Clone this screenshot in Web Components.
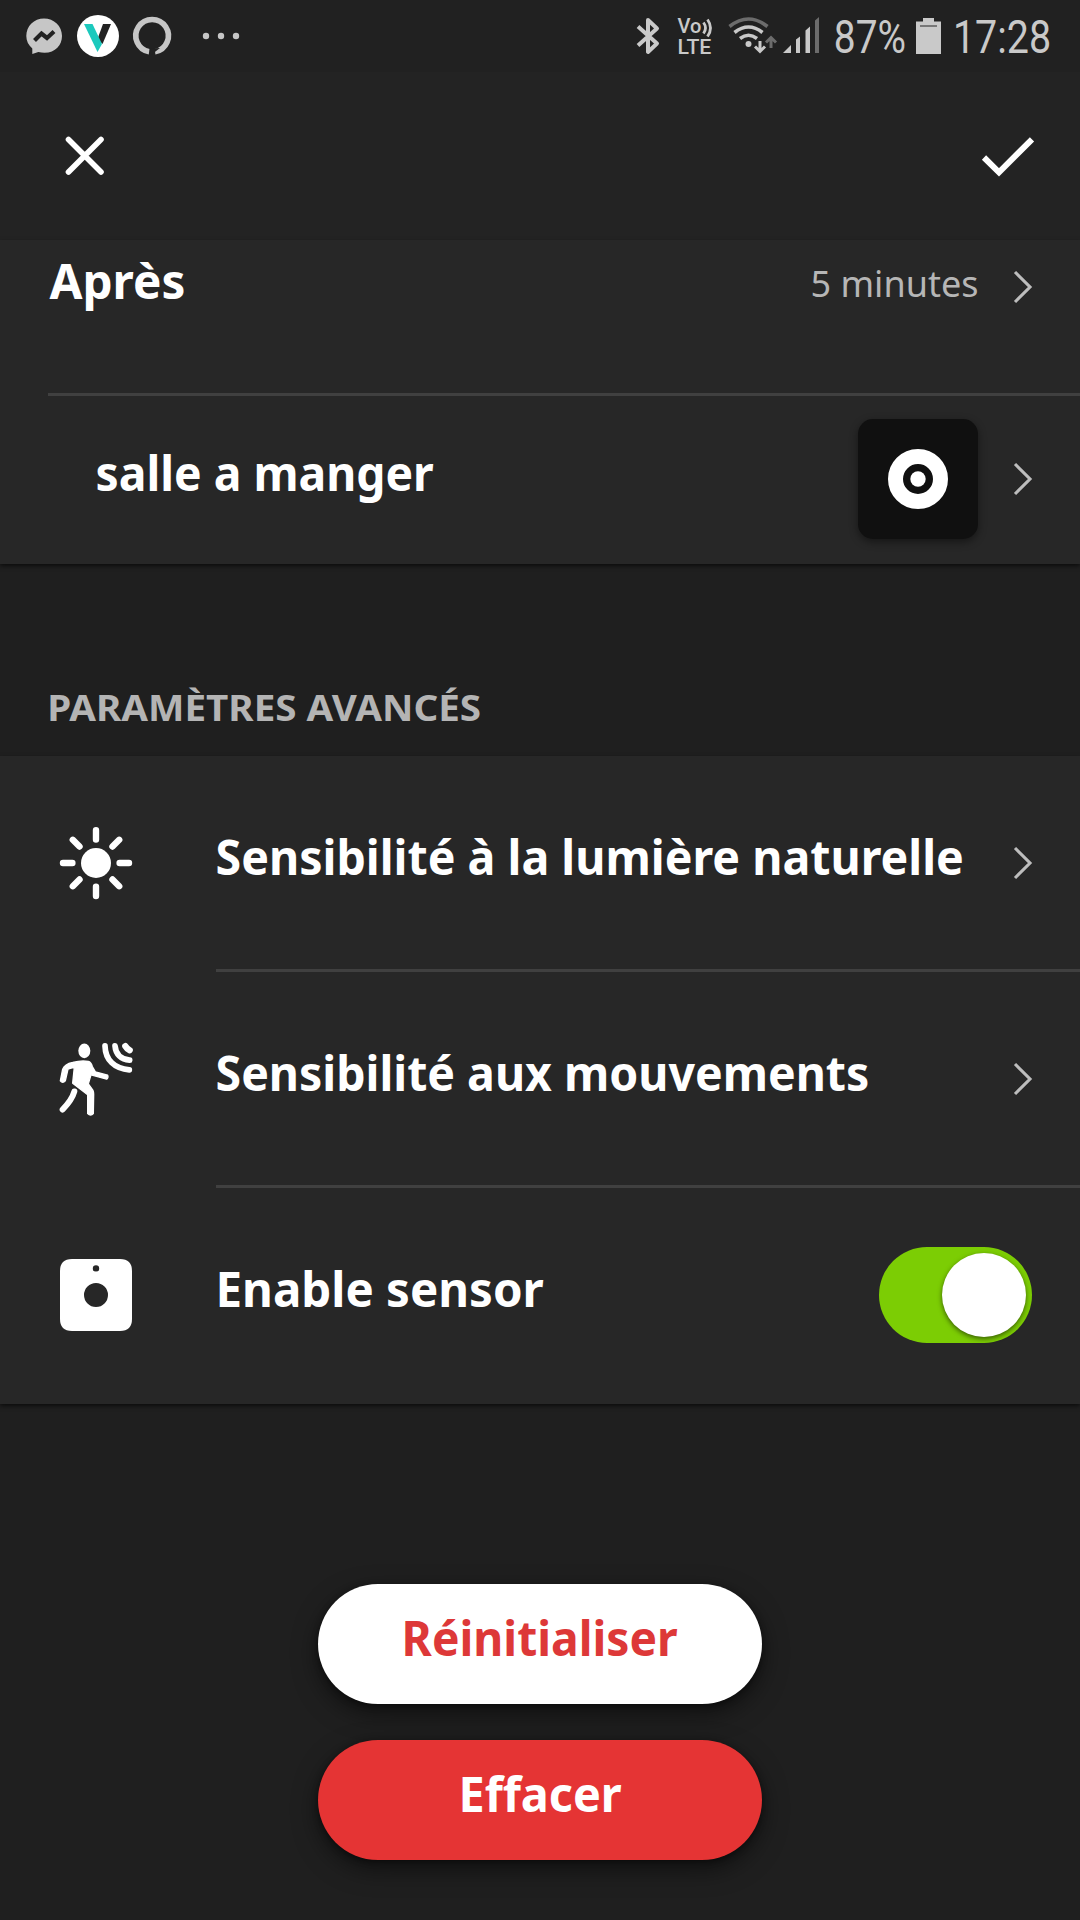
<!DOCTYPE html>
<html lang="fr">
<head>
<meta charset="utf-8">
<title>Paramètres du capteur</title>
<style>
	html, body {
		margin: 0;
		background: #1f1f1f;
	}
	body {
		width: 1080px;
		height: 1920px;
		overflow: hidden;
		font-family: "Noto Sans", "Open Sans", sans-serif;
		color: #fff;
	}
</style>
</head>
<body>
<sensor-page>
	<status-bar slot="status"></status-bar>
	<app-bar slot="bar"></app-bar>

	<settings-card>
		<settings-row class="cut" inset="48">
			<fit-text width="134">Après</fit-text>
			<fit-text slot="value" class="value" width="165">5 minutes</fit-text>
			<ui-icon slot="end" name="chevron"></ui-icon>
		</settings-row>
		<settings-row class="room" inset="96">
			<fit-text width="336">salle a manger</fit-text>
			<scene-tile slot="value"></scene-tile>
			<ui-icon slot="end" name="chevron"></ui-icon>
		</settings-row>
	</settings-card>

	<section-title><fit-text width="430">PARAMÈTRES AVANCÉS</fit-text></section-title>

	<settings-card>
		<settings-row inset="216">
			<ui-icon slot="icon" name="sun"></ui-icon>
			<fit-text width="745">Sensibilité à la lumière naturelle</fit-text>
			<ui-icon slot="end" name="chevron"></ui-icon>
		</settings-row>
		<settings-row inset="216">
			<ui-icon slot="icon" name="motion"></ui-icon>
			<fit-text width="650">Sensibilité aux mouvements</fit-text>
			<ui-icon slot="end" name="chevron"></ui-icon>
		</settings-row>
		<settings-row class="last" inset="218">
			<ui-icon slot="icon" name="sensor"></ui-icon>
			<fit-text width="324">Enable sensor</fit-text>
			<toggle-switch slot="end"></toggle-switch>
		</settings-row>
	</settings-card>

	<pill-button slot="actions"><fit-text width="272">Réinitialiser</fit-text></pill-button>
	<pill-button slot="actions" class="danger"><fit-text width="159">Effacer</fit-text></pill-button>
</sensor-page>

<script>
(function() {
	const ICONS = {
		close: [40, 40, `<path d="M3.5 3.5L36 36M36 3.5L3.5 36" fill="none" stroke="#fff" stroke-width="5.6" stroke-linecap="round"/>`],
		check: [54, 42, `<path d="M3 22.5L18 37.3L51 4.3" fill="none" stroke="#fff" stroke-width="6"/>`],
		chevron: [20, 34, `<path d="M3 2L18 17L3 32" fill="none" stroke="#bdbdbd" stroke-width="3.1"/>`],
		sun: [72, 72, `<circle cx="36" cy="36" r="15" fill="#fff"/>
			<path d="M36 3.2V12.6M36 59.6V69M3 36H12.4M59.6 36H69M12.8 12.8L19.5 19.5M59.2 12.8L52.5 19.5M12.8 59.2L19.5 52.5M59.2 59.2L52.5 52.5"
				fill="none" stroke="#fff" stroke-width="6.4" stroke-linecap="round"/>`],
		motion: [72, 72, `<g transform="scale(.33333) translate(-60 -67.5)" stroke-linecap="round" stroke-linejoin="round">
			<ellipse cx="133" cy="91" rx="18" ry="22" fill="#fff"/>
			<path d="M98 126Q125 119 145 123Q153 125 157 138L166 154L203 164Q206 171 200 176L153 163L145 190L159 210Q161 214 161 221L160 279Q152 288 143 279L143 223L98 188L103 140L84 146L76 181Q68 190 61 181L68 146Q74 131 98 126Z" fill="#fff" stroke="#fff" stroke-width="4"/>
			<path d="M103 213Q96 238 68 267" fill="none" stroke="#fff" stroke-width="18"/>
			<g fill="none" stroke="#fff" stroke-width="17">
				<path d="M195 76C196 119 224 145 268 148"/>
				<path d="M225 76C227 102 243 117 269 119"/>
			</g>
			<path d="M256 77Q260 84 269 89" fill="none" stroke="#fff" stroke-width="19"/>
		</g>`],
		sensor: [72, 72, `<path fill="#fff" fill-rule="evenodd" d="M12 0H60Q72 0 72 12V60Q72 72 60 72H12Q0 72 0 60V12Q0 0 12 0ZM36 24a12 12 0 1 0 0 24a12 12 0 1 0 0 -24ZM36 6.2a3.2 3.2 0 1 0 0 6.4a3.2 3.2 0 1 0 0 -6.4Z"/>`],
		messenger: [36, 37, `<path d="M18 .5C8 .5.3 8 .3 18c0 5 2.2 9.2 6 12.5V36l6-2C27 37.500 36 28.500 36 18C36 8 28 .5 18 .5Z" fill="#c6c6c6"/>
			<path d="M8.500 22.500L15.500 15.500L21 20L28 13.500" fill="none" stroke="#212121" stroke-width="4.200"/>`],
		vmark: [42, 42, `<circle cx="21" cy="21" r="21" fill="#fff"/>
			<path d="M26 9H34L25.500 29L20.500 24Z" fill="#222"/>
			<path d="M7 9H15.500L25 29L20.500 37Z" fill="#1cc9bd"/>`],
		ring: [38, 38, `<path d="M16.200 34.800A16.300 16.300 0 1 1 22 34.800" fill="none" stroke="#c6c6c6" stroke-width="5.600"/>
			<path d="M16.600 38V31.500L27 31L18 38Z" fill="#212121"/>`],
		dots: [38, 8, `<g fill="#c6c6c6"><circle cx="4" cy="4" r="3.200"/><circle cx="19" cy="4" r="3.200"/><circle cx="34" cy="4" r="3.200"/></g>`],
		bluetooth: [24, 38, `<path d="M2 9.500L21 26.500L12 35V3L21 11.500L2 28.500" fill="none" stroke="#c9c9c9" stroke-width="4" stroke-linejoin="round"/>`],
		waves: [10, 18, `<path d="M1.500 3.500Q5.500 9 1.500 14.500M5.500 .5Q11.500 9 5.500 17.500" fill="none" stroke="#c9c9c9" stroke-width="2.800"/>`],
		wifi: [48, 37, `<g fill="none" stroke="#c9c9c9" stroke-width="3.600">
				<path d="M1.500 9.500Q20.500 -5.500 39.500 9.500" stroke="#6c6c6c"/>
				<path d="M6.500 15.500Q20.500 4.500 34.500 15.500"/>
				<path d="M12 21.500Q20.500 15 29 21.500"/>
				<path d="M32 24V34M27 29.500L32 34.500L37 29.500" stroke-width="3"/>
				<path d="M43 31V21M38 25.500L43 20.500L48 25.500" stroke="#6c6c6c" stroke-width="3"/>
			</g><circle cx="20.500" cy="27" r="3" fill="#c9c9c9"/>`],
		signal: [36, 37, `<path d="M0 36L8 28V36ZM13 22.500L17 19.500V36H13ZM22.500 13.500L27 9.500V36H22.500Z" fill="#c9c9c9"/><path d="M32 3.500L36 0V36H32Z" fill="#6c6c6c"/>`],
		battery: [25, 36, `<path d="M7 0H18V3.500H25V36H0V3.500H7Z" fill="#c9c9c9"/><path d="M4 8H21" stroke="#777" stroke-width="2"/>`]
	};

	function define(name, html, setup) {
		const template = document.createElement("template");
		template.innerHTML = html;
		customElements.define(name, class extends HTMLElement {
			constructor() {
				super();
				this._shadowRoot = this.attachShadow({mode: "open"});
				this._shadowRoot.appendChild(template.content.cloneNode(true));
			}

			connectedCallback() {
				if (setup) {
					setup(this, this._shadowRoot);
				}
			}
		});
	}

	// icon by name, drawn at its own size
	define("ui-icon", `
		<style>
		:host { display: block; flex: none; }
		svg { display: block; overflow: visible; }
		</style>
		<div id="box"></div>
	`, (el, root) => {
		const [w, h, body] = ICONS[el.getAttribute("name")];
		root.getElementById("box").innerHTML = `<svg width="${w}" height="${h}" viewBox="0 0 ${w} ${h}">${body}</svg>`;
	});

	define("status-bar", `
		<style>
		:host {
			display: flex;
			align-items: flex-start;
			height: 72px;
			box-sizing: border-box;
			padding: 0 32px 0 26px;
			background: #212121;
			font-family: Roboto, sans-serif;
			color: #c9c9c9;
		}
		.gap { flex: 1; }
		.big { font-size: 46px; line-height: 46px; margin-top: 14px; }
		.volte { margin: 16px 0 0 16px; font-size: 21px; line-height: 21px; font-weight: 500; }
		.vo { display: flex; gap: 2px; height: 21px; }
		.vo ui-icon { margin-top: 3px; }
		.volte > fit-text { margin-left: 1px; }
		</style>
		<ui-icon name="messenger" style="margin-top:18px"></ui-icon>
		<ui-icon name="vmark" style="margin:15px 0 0 15px"></ui-icon>
		<ui-icon name="ring" style="margin:17px 0 0 14px"></ui-icon>
		<ui-icon name="dots" style="margin:32px 0 0 31px"></ui-icon>
		<div class="gap"></div>
		<ui-icon name="bluetooth" style="margin-top:17px"></ui-icon>
		<div class="volte">
			<div class="vo"><fit-text width="24">Vo</fit-text><ui-icon name="waves"></ui-icon></div>
			<fit-text width="33">LTE</fit-text>
		</div>
		<ui-icon name="wifi" style="margin:17px 0 0 16px"></ui-icon>
		<ui-icon name="signal" style="margin:17px 0 0 7px"></ui-icon>
		<fit-text class="big" style="margin-left:15px" width="69">87%</fit-text>
		<ui-icon name="battery" style="margin:18px 0 0 13px"></ui-icon>
		<fit-text class="big" style="margin-left:13px" width="94">17:28</fit-text>
	`);

	define("app-bar", `
		<style>
		:host {
			display: flex;
			align-items: center;
			justify-content: space-between;
			height: 168px;
			box-sizing: border-box;
			padding: 0 45px 0 65px;
			background: #232323;
		}
		</style>
		<ui-icon name="close"></ui-icon>
		<ui-icon name="check"></ui-icon>
	`);

	define("settings-card", `
		<style>
		:host {
			display: block;
			background: #272727;
			box-shadow: 0 2px 4px rgba(0, 0, 0, .6);
		}
		</style>
		<slot></slot>
	`);

	define("settings-row", `
		<style>
		:host {
			display: flex;
			position: relative;
			height: 216px;
			box-sizing: border-box;
			padding-bottom: 3px;
			align-items: center;
			font-size: 47.500px;
			font-weight: 700;
			line-height: 60px;
			--line: #404040;
			--lift: 11px;
		}
		:host(.cut) { height: 156px; padding-bottom: 63px; }
		:host(.room) { height: 168px; padding-bottom: 2px; --line: transparent; --lift: 12px; }
		:host(.last) { --line: transparent; }
		.icon { flex: none; box-sizing: border-box; padding-left: 60px; }
		.text { flex: 1; padding-bottom: var(--lift); }
		.value { margin-right: 34px; }
		.end { margin-right: 48px; }
		.line {
			position: absolute;
			right: 0;
			bottom: 0;
			height: 3px;
			background: var(--line);
		}
		::slotted(.value) {
			font-size: 35.500px;
			font-weight: 400;
			color: #b6b6b6;
			padding: 0 2px 8px 0;
		}
		</style>
		<div class="icon"><slot name="icon"></slot></div>
		<div class="text"><slot></slot></div>
		<div class="value"><slot name="value"></slot></div>
		<div class="end"><slot name="end"></slot></div>
		<div class="line"></div>
	`, (el, root) => {
		const inset = el.getAttribute("inset") + "px";
		root.querySelector(".icon").style.width = inset;
		root.querySelector(".icon").style.paddingLeft = el.querySelector("[slot=icon]") ? "" : "0";
		root.querySelector(".line").style.left = inset;
	});

	define("scene-tile", `
		<style>
		:host {
			display: grid;
			place-items: center;
			width: 120px;
			height: 120px;
			border-radius: 15px;
			background: #101010;
			box-shadow: 0 3px 9px rgba(0, 0, 0, .45);
		}
		svg { display: block; }
		</style>
		<svg width="60" height="60" viewBox="0 0 60 60">
			<circle cx="30" cy="30" r="22.500" fill="none" stroke="#fff" stroke-width="15"/>
			<circle cx="30" cy="30" r="7.700" fill="#fff"/>
		</svg>
	`);

	define("toggle-switch", `
		<style>
		:host {
			display: flex;
			align-items: center;
			justify-content: flex-end;
			width: 153px;
			height: 96px;
			box-sizing: border-box;
			padding-right: 6px;
			border-radius: 48px;
			background: #7ccd04;
		}
		.knob {
			width: 84px;
			height: 84px;
			border-radius: 50%;
			background: #fff;
			box-shadow: 0 2px 5px rgba(0, 0, 0, .55);
		}
		</style>
		<div class="knob"></div>
	`);

	define("section-title", `
		<style>
		:host {
			display: flex;
			align-items: flex-end;
			height: 192px;
			box-sizing: border-box;
			padding: 0 0 25px 49px;
			font-size: 35.500px;
			line-height: 48px;
			font-weight: 700;
			color: #b4b4b4;
		}
		</style>
		<slot></slot>
	`);

	define("pill-button", `
		<style>
		:host {
			display: flex;
			align-items: center;
			justify-content: center;
			width: 444px;
			height: 120px;
			box-sizing: border-box;
			padding-bottom: 12px;
			border-radius: 60px;
			background: #fff;
			color: #dd3838;
			font-size: 47.500px;
			font-weight: 700;
			line-height: 60px;
			box-shadow: 0 9px 24px rgba(0, 0, 0, .5), 0 2px 6px rgba(0, 0, 0, .4);
		}
		:host(.danger) { background: #e53434; color: #fff; }
		</style>
		<slot></slot>
	`);

	define("sensor-page", `
		<style>
		:host { display: flex; flex-direction: column; height: 1920px; }
		main { display: block; }
		footer {
			display: flex;
			flex-direction: column;
			align-items: center;
			gap: 36px;
			padding-top: 180px;
		}
		</style>
		<slot name="status"></slot>
		<slot name="bar"></slot>
		<main><slot></slot></main>
		<footer><slot name="actions"></slot></footer>
	`);

	// one line of text, condensed so that its ink is exactly "width" px wide.
	// defined last: it reads the font that the elements around it set
	const ctx = document.createElement("canvas").getContext("2d");
	define("fit-text", `
		<style>
		:host { display: block; flex: none; white-space: nowrap; }
		span { display: inline-block; vertical-align: top; transform-origin: 0 50%; }
		</style>
		<span><slot></slot></span>
	`, (el, root) => {
		const width = Number(el.getAttribute("width"));
		const style = getComputedStyle(el);
		ctx.font = `${style.fontWeight} ${style.fontSize} ${style.fontFamily}`;
		const m = ctx.measureText(el.textContent);
		const scale = width / (m.actualBoundingBoxLeft + m.actualBoundingBoxRight);
		el.style.width = width + "px";
		root.querySelector("span").style.transform = `translateX(${m.actualBoundingBoxLeft * scale + 1.5}px) scaleX(${scale})`;
	});
})();
</script>
</body>
</html>
